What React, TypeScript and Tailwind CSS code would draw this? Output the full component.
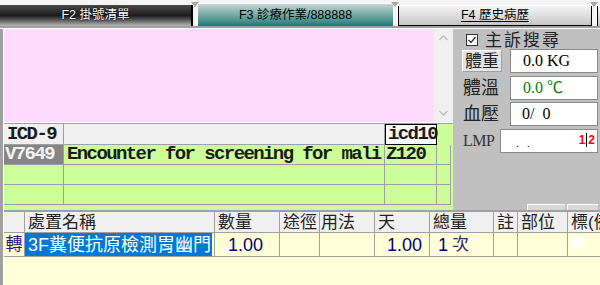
import React from "react";

const sans = "font-['Liberation_Sans','Noto_Sans_CJK_TC',sans-serif]";
const serif = "font-['Liberation_Serif','Noto_Sans_CJK_TC',serif]";
const mono = "font-['Liberation_Mono',monospace]";

function Notch() {
  return (
    <div className="w-[4px] h-full relative shrink-0">
      <svg className="absolute left-[-2px] top-[2px]" width="8" height="5" viewBox="0 0 8 5">
        <path d="M0 0 L8 0 L4 5 Z" fill="#a8a8a8" />
      </svg>
    </div>
  );
}

function Chevron({ up }: { up?: boolean }) {
  return (
    <svg width="9" height="6" viewBox="0 0 9 6">
      <path d={up ? "M0.5 5 L4.5 1 L8.5 5" : "M0.5 1 L4.5 5 L8.5 1"} stroke="#bdbdbd" strokeWidth="1.3" fill="none" />
    </svg>
  );
}

export default function App() {
  const gridRows = [
    { a: "V7649", b: "Encounter for screening for mali", c: "Z120", sel: true },
    { a: "", b: "", c: "", sel: false },
    { a: "", b: "", c: "", sel: false },
  ];
  return (
    <div className={`w-[600px] h-[285px] overflow-hidden bg-[#c0c0c0] flex flex-col ${sans}`}>
      {/* tabs */}
      <div className="h-[26px] bg-[#f4f4f4] flex items-end shrink-0">
        <div className="w-[193px] h-[21px] border-r-2 border-black bg-linear-to-b from-[#4a4a4a] via-[#1c1c1c] to-[#b8b8b8] flex items-center justify-center text-white text-[12.5px] [text-shadow:0_0_2px_#000,0_0_1px_#000]">
          F2 掛號清單
        </div>
        <Notch />
        <div className="w-[196px] h-[23px] border-l border-t border-white bg-linear-to-b from-[#c4d6d4] to-[#007d76] flex items-center justify-center text-black text-[12.5px]">
          F3 診療作業/888888
        </div>
        <Notch />
        <div className="w-[195px] h-[21px] border-t border-l border-white">
          <div className="w-full h-full border-l border-r border-b border-black bg-linear-to-b from-[#f6f6f6] to-[#c6c6c6] flex items-center justify-center text-black text-[12.5px]">
            <span className="underline underline-offset-2">F4 歷史病歷</span>
          </div>
        </div>
        <Notch />
        <div className="flex-1 h-[21px] border-t border-l border-white">
          <div className="w-full h-full border-l border-black bg-linear-to-b from-[#f6f6f6] to-[#c6c6c6]" />
        </div>
      </div>
      <div className="h-[2px] bg-[#a0a0a0] shrink-0" />
      <div className="h-[1px] bg-white shrink-0" />

      {/* main */}
      <div className="flex h-[181px] shrink-0">
        <div className="w-[453px] border-l-[3px] border-[#a0a0a0] shrink-0">
          <div className="h-full border-l border-white flex flex-col">
            <div className="h-[93px] flex shrink-0">
              <div className="flex-1 bg-[#ffdcff]" />
              <div className="w-[19px] bg-[#f0f0f0] flex flex-col items-center justify-between py-[6px]">
                <Chevron up />
                <Chevron />
              </div>
            </div>
            <div className="h-[1px] bg-white shrink-0" />
            <div className="h-[1px] bg-[#a0a0a0] shrink-0" />
            <div className={`flex-1 bg-[#ccff99] flex flex-col ${mono} font-bold text-[19px] tracking-[-1.6px] text-[#1a1a1a]`}>
              {/* header */}
              <div className="h-[21px] flex shrink-0">
                <div className="w-[60px] bg-[#f0f0f0] border-r border-b border-[#a0a0a0] flex items-center pl-[3px] leading-none">ICD-9</div>
                <div className="w-[321px] bg-[#f0f0f0] border-r border-b border-[#a0a0a0]" />
                <div className="w-[52px] bg-[#f8f8f8] border border-black flex items-center pl-[2px] leading-none">icd10</div>
              </div>
              {gridRows.map((r, i) => (
                <div key={i} className="h-[20px] flex shrink-0">
                  <div className={`w-[60px] border-r border-b border-[#a0a0a0] flex items-center pl-[1px] leading-none ${r.sel ? "bg-[#858585] text-[#f4f4f4]" : ""}`}>{r.a}</div>
                  <div className="w-[321px] border-r border-b border-[#a0a0a0] flex items-center pl-[3px] leading-none whitespace-nowrap">{r.b}</div>
                  <div className="w-[52px] border-r border-b border-[#a0a0a0] flex items-center pl-[1px] leading-none">{r.c}</div>
                  <div className="w-[14px] border-r border-b border-[#a0a0a0]" />
                </div>
              ))}
            </div>
          </div>
        </div>
        <div className="w-[3px] shrink-0" />
        {/* right panel */}
        <div className={`flex-1 flex flex-col pl-[6px] pr-[2px] ${serif} text-[#222]`}>
          <div className="h-[20px] flex items-center pl-[4px] mt-[1px]">
            <div className="w-[12px] h-[12px] bg-white border border-[#333] flex items-center justify-center">
              <svg width="10" height="10" viewBox="0 0 10 10">
                <path d="M1.5 5 L4 7.5 L8.5 2" stroke="#333" strokeWidth="1.3" fill="none" />
              </svg>
            </div>
            <span className="ml-[7px] text-[17px] tracking-[2px] leading-none">主訴搜尋</span>
          </div>
          <div className="h-[24px] flex items-center mt-[-1px]">
            <div className="w-[40px] h-[22px] bg-[#e3e3e3] border-t border-l border-white border-r border-b border-r-[#a0a0a0] border-b-[#a0a0a0] flex items-center justify-center text-[17px] leading-none">體重</div>
            <div className="ml-[8px] flex-1 h-[24px] bg-white border border-[#8a8a8a] flex items-center pl-[12px] text-[16px] text-black">0.0 KG</div>
          </div>
          <div className="h-[24px] flex items-center mt-[3px]">
            <div className="w-[48px] pl-[1px] text-[18px] leading-none">體溫</div>
            <div className="flex-1 h-[24px] bg-white border border-[#8a8a8a] flex items-center pl-[12px] text-[16px] text-[#008000]">0.0 ℃</div>
          </div>
          <div className="h-[24px] flex items-center mt-[2px]">
            <div className="w-[48px] pl-[1px] text-[18px] leading-none">血壓</div>
            <div className="flex-1 h-[24px] bg-white border border-[#8a8a8a] flex items-center pl-[11px] text-[16px] text-black whitespace-pre">0/  0</div>
          </div>
          <div className="h-[24px] flex items-center mt-[3px]">
            <div className="w-[38px] pl-[1px] text-[16px] leading-none text-[#333] tracking-[-0.5px]">LMP</div>
            <div className="flex-1 h-[24px] bg-white border border-[#8a8a8a] flex items-end pb-[3px] pl-[15px] pr-[2px] text-black">
              <span className="text-[11px] leading-none whitespace-pre">.   .</span>
              <span className={`ml-auto text-[12px] font-bold text-[#ff0000] leading-none self-center flex items-center ${sans}`}>
                1<span className="w-[1px] h-[14px] bg-black mx-[1px]" />2
              </span>
            </div>
          </div>
          <div className="mt-auto h-[6px] flex justify-end gap-[2px]">
            <div className="w-[38px] bg-[#d8d8d8] border-t border-l border-white" />
            <div className="w-[31px] bg-[#d8d8d8] border-t border-l border-white" />
          </div>
        </div>
      </div>

      {/* bottom table */}
      <div className="flex-1 border-l-[3px] border-[#a0a0a0]">
        <div className="h-full border-l border-white bg-[#ffffd8] flex flex-col">
          <div className="h-[2px] bg-[#a0a0a0] shrink-0" />
          <div className="h-[21px] flex shrink-0 bg-[#f0f0f0] text-[17px] leading-none text-[#222] whitespace-nowrap">
            <div className="w-[21px] border-r border-b border-[#a0a0a0]" />
            <div className="w-[190px] border-r border-b border-[#a0a0a0] flex items-center pl-[3px]">處置名稱</div>
            <div className="w-[65px] border-r border-b border-[#a0a0a0] flex items-center pl-[3px]">數量</div>
            <div className="w-[40px] border-r border-b border-[#a0a0a0] flex items-center pl-[3px] overflow-hidden">途徑</div>
            <div className="w-[55px] border-r border-b border-[#a0a0a0] flex items-center pl-[1px]">用法</div>
            <div className="w-[55px] border-r border-b border-[#a0a0a0] flex items-center pl-[3px]">天</div>
            <div className="w-[64px] border-r border-b border-[#a0a0a0] flex items-center pl-[3px]">總量</div>
            <div className="w-[24px] border-r border-b border-[#a0a0a0] flex items-center pl-[3px] overflow-hidden">註</div>
            <div className="w-[50px] border-r border-b border-[#a0a0a0] flex items-center pl-[3px]">部位</div>
            <div className="flex-1 border-b border-[#a0a0a0] flex items-center pl-[3px] overflow-hidden">標(備註)</div>
          </div>
          <div className="h-[24px] flex shrink-0 text-[#000080] leading-none whitespace-nowrap">
            <div className="w-[21px] border-r border-b border-[#a0a0a0] flex items-center justify-center text-[17px] text-[#2a1a6a]">轉</div>
            <div className="w-[190px] border-r border-b border-[#a0a0a0] pr-[2px]">
              <div className="h-full bg-[#0078d7] text-white text-[18px] flex items-center pl-[3px]">3F糞便抗原檢測胃幽門</div>
            </div>
            <div className="w-[65px] border-r border-b border-[#a0a0a0] flex items-center pl-[13px] text-[18px]">1.00</div>
            <div className="w-[40px] border-r border-b border-[#a0a0a0]" />
            <div className="w-[55px] border-r border-b border-[#a0a0a0]" />
            <div className="w-[55px] border-r border-b border-[#a0a0a0] flex items-center justify-end pr-[7px] text-[18px]">1.00</div>
            <div className="w-[64px] border-r border-b border-[#a0a0a0] flex items-center pl-[8px] text-[18px]">1 <span className="ml-[4px] text-[17px] text-[#2a2a7a]">次</span></div>
            <div className="w-[24px] border-r border-b border-[#a0a0a0]" />
            <div className="w-[50px] border-r border-b border-[#a0a0a0]" />
            <div className="flex-1 border-b border-[#a0a0a0] pl-[4px] pt-[4px]">
              <div className="w-[11px] h-[11px] bg-white" />
            </div>
          </div>
        </div>
      </div>
    </div>
  );
}
